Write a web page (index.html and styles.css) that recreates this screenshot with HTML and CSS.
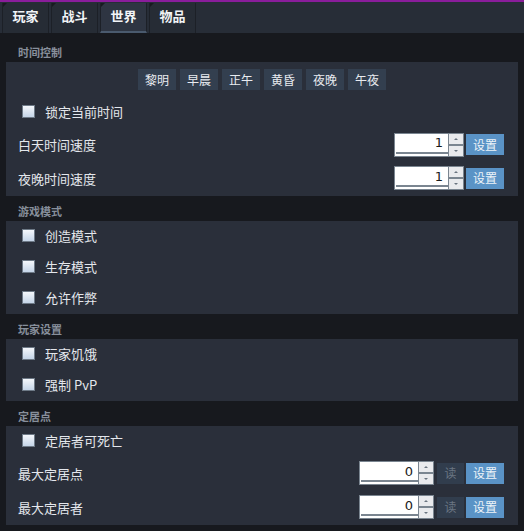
FILE: index.html
```html
<!DOCTYPE html>
<html lang="zh-CN">

<head>
    <meta charset="UTF-8">
    <title>世界设置</title>
    <link rel="stylesheet" href="styles.css">
</head>

<body>
    <div class="tab-bar">
        <div class="tab">玩家</div>
        <div class="tab">战斗</div>
        <div class="tab active">世界</div>
        <div class="tab">物品</div>
    </div>

    <div class="content">
        <!-- 时间控制 -->
        <div class="section-title first">时间控制</div>
        <div class="panel time-panel">
            <div class="preset-row">
                <button class="preset">黎明</button>
                <button class="preset">早晨</button>
                <button class="preset">正午</button>
                <button class="preset">黄昏</button>
                <button class="preset">夜晚</button>
                <button class="preset">午夜</button>
            </div>
            <label class="row check-row tall"><span class="check"></span>锁定当前时间</label>
            <div class="row value-row mid">
                <span class="label">白天时间速度</span>
                <div class="controls">
                    <div class="spin">
                        <input class="spin-input" type="text" value="1">
                        <div class="spin-btns"><span class="up"></span><span class="down"></span></div>
                    </div>
                    <button class="set-btn">设置</button>
                </div>
            </div>
            <div class="row value-row tall">
                <span class="label">夜晚时间速度</span>
                <div class="controls">
                    <div class="spin">
                        <input class="spin-input" type="text" value="1">
                        <div class="spin-btns"><span class="up"></span><span class="down"></span></div>
                    </div>
                    <button class="set-btn">设置</button>
                </div>
            </div>
        </div>

        <!-- 游戏模式 -->
        <div class="section-title">游戏模式</div>
        <div class="panel">
            <label class="row check-row"><span class="check"></span>创造模式</label>
            <label class="row check-row"><span class="check"></span>生存模式</label>
            <label class="row check-row"><span class="check"></span>允许作弊</label>
        </div>

        <!-- 玩家设置 -->
        <div class="section-title">玩家设置</div>
        <div class="panel">
            <label class="row check-row"><span class="check"></span>玩家饥饿</label>
            <label class="row check-row"><span class="check"></span>强制 PvP</label>
        </div>

        <!-- 定居点 -->
        <div class="section-title">定居点</div>
        <div class="panel">
            <label class="row check-row"><span class="check"></span>定居者可死亡</label>
            <div class="row value-row tall">
                <span class="label">最大定居点</span>
                <div class="controls">
                    <div class="spin wide">
                        <input class="spin-input" type="text" value="0">
                        <div class="spin-btns"><span class="up"></span><span class="down"></span></div>
                    </div>
                    <button class="read-btn">读</button>
                    <button class="set-btn">设置</button>
                </div>
            </div>
            <div class="row value-row tall">
                <span class="label">最大定居者</span>
                <div class="controls">
                    <div class="spin wide">
                        <input class="spin-input" type="text" value="0">
                        <div class="spin-btns"><span class="up"></span><span class="down"></span></div>
                    </div>
                    <button class="read-btn">读</button>
                    <button class="set-btn">设置</button>
                </div>
            </div>
        </div>
    </div>
</body>
</html>
```

FILE: styles.css
```css
body {
    margin: 0;
    padding: 0;
    background-color: #17191e;
    font-family: "Noto Sans CJK SC", "Liberation Sans", sans-serif;
    color: #e4e7ec;
    font-size: 13px;
    width: 524px;
    height: 531px;
    overflow: hidden;
}

/* 顶部标签 */
.tab-bar {
    display: flex;
    height: 31px;
    padding-left: 2px;
    gap: 2px;
    border-top: 2px solid #8a1d9b;
    background-color: #272d37;
}

.tab {
    position: relative;
    width: 47px;
    padding-top: 3px;
    box-sizing: border-box;
    text-align: center;
    font-weight: bold;
    font-size: 13px;
    color: #f2f4f7;
    background-color: #262c35;
    border-right: 1px solid #1c2027;
    border-left: 1px solid #1c2027;
    margin-top: 1px;
}

.tab::before {
    content: "";
    position: absolute;
    left: 0;
    top: 0;
    border-top: 4px solid #171a1f;
    border-right: 4px solid transparent;
}

.tab.active {
    background-color: #2e3542;
    border-bottom: 2px solid #4a5a6e;
}

.content {
    padding: 0 6px;
}

.section-title {
    height: 25px;
    padding: 8px 0 0 12px;
    box-sizing: border-box;
    font-size: 11px;
    line-height: 14px;
    font-weight: bold;
    color: #878f9b;
}

.section-title.first {
    height: 29px;
    padding-top: 12px;
}

.panel {
    background-color: #2a2f3a;
    display: flex;
    flex-direction: column;
}

.time-panel {
    padding-top: 7px;
}

.preset-row {
    display: flex;
    justify-content: center;
    gap: 4px;
    margin-bottom: 5px;
}

.preset {
    width: 38px;
    height: 21px;
    padding: 0 0 1px 0;
    border: none;
    background-color: #333f4f;
    color: #e8ebf0;
    font-family: inherit;
    font-size: 12px;
}

.row {
    display: flex;
    align-items: center;
    height: 31px;
    padding: 0 14px 2px 12px;
    box-sizing: border-box;
}

.row.tall {
    height: 34px;
}

.row.mid {
    height: 33px;
}

.check-row {
    padding-left: 16px;
}

.check {
    width: 11px;
    height: 11px;
    margin-right: 10px;
    border: 1px solid #6e7a87;
    background: linear-gradient(#f4f7fb, #c5d5e8);
}

.value-row {
    justify-content: space-between;
}

.controls {
    display: flex;
    align-items: center;
    gap: 2px;
}

/* 数字输入框 */
.spin {
    display: flex;
    width: 70px;
    height: 24px;
    border: 1px solid #7a8590;
    box-sizing: border-box;
    background-color: #fff;
}

.spin.wide {
    width: 75px;
}

.spin-input {
    flex: 1;
    min-width: 0;
    border: none;
    border-bottom: 2px solid #7a8590;
    margin: 0 0 2px 1px;
    padding: 0 5px 0 0;
    text-align: right;
    font-family: "DejaVu Sans", sans-serif;
    font-size: 13px;
    color: #1a1a1a;
    outline: none;
}

.spin-btns {
    width: 14px;
    display: flex;
    flex-direction: column;
    border-left: 1px solid #7a8590;
}

.spin-btns span {
    flex: 1;
    background-color: #e9eaed;
    position: relative;
}

.spin-btns .up {
    border-bottom: 2px solid #7a8590;
}

.spin-btns span::after {
    content: "";
    position: absolute;
    left: 5px;
    top: 4px;
    border-left: 2px solid transparent;
    border-right: 2px solid transparent;
}

.spin-btns .up::after {
    border-bottom: 2px solid #6a7480;
}

.spin-btns .down::after {
    border-top: 2px solid #6a7480;
}

.set-btn {
    width: 38px;
    height: 21px;
    padding: 0 0 1px 0;
    border: none;
    background-color: #5a93c6;
    color: #eef3f8;
    font-family: inherit;
    font-size: 12px;
}

.read-btn {
    width: 27px;
    height: 21px;
    margin-left: 1px;
    padding: 0 0 1px 0;
    border: none;
    background-color: #313d4d;
    color: #6a7582;
    font-family: inherit;
    font-size: 12px;
}
```
